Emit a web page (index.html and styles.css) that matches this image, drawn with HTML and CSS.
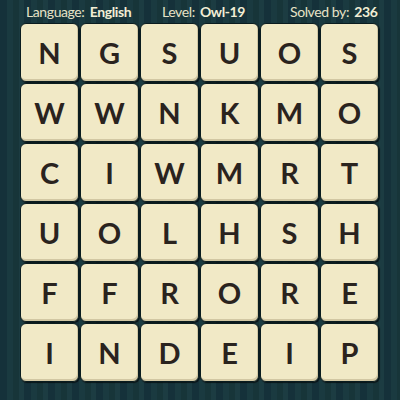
FILE: index.html
```html
<!DOCTYPE html>
<html>
<head>
<meta charset="utf-8">
<link rel="stylesheet" href="styles.css">
</head>
<body>
<div class="page">
  <div class="header">
    <div class="item lang">Language: <b>English</b></div>
    <div class="item level">Level: <b>Owl-19</b></div>
    <div class="item solved">Solved by: <b>236</b></div>
  </div>
  <div class="grid">
    <div class="tile">N</div><div class="tile">G</div><div class="tile">S</div><div class="tile">U</div><div class="tile">O</div><div class="tile">S</div>
    <div class="tile">W</div><div class="tile">W</div><div class="tile">N</div><div class="tile">K</div><div class="tile">M</div><div class="tile">O</div>
    <div class="tile">C</div><div class="tile">I</div><div class="tile">W</div><div class="tile">M</div><div class="tile">R</div><div class="tile">T</div>
    <div class="tile">U</div><div class="tile">O</div><div class="tile">L</div><div class="tile">H</div><div class="tile">S</div><div class="tile">H</div>
    <div class="tile">F</div><div class="tile">F</div><div class="tile">R</div><div class="tile">O</div><div class="tile">R</div><div class="tile">E</div>
    <div class="tile">I</div><div class="tile">N</div><div class="tile">D</div><div class="tile">E</div><div class="tile">I</div><div class="tile">P</div>
  </div>
</div>
</body>
</html>
```
FILE: styles.css
```css
html, body {
  margin: 0;
  padding: 0;
}
body {
  width: 400px;
  height: 400px;
  overflow: hidden;
  background-color: #17343a;
  background-image: repeating-linear-gradient(90deg,
    #15313a 0px, #15313a 7px,
    #1a3a40 7px, #1a3a40 13px,
    #173539 13px, #173539 19px,
    #1c3c42 19px, #1c3c42 24px);
  font-family: Lato, "Open Sans", sans-serif;
}
.page {
  display: flex;
  flex-direction: column;
}
.header {
  height: 23px;
  display: flex;
  align-items: center;
  padding-left: 26px;
  color: #e6e2c6;
  font-size: 14px;
  letter-spacing: -0.4px;
}
.header b {
  font-weight: 700;
  color: #f2eed5;
  margin-left: 2px;
}
.lang {
  width: 136px;
}
.level {
  width: 128px;
}
.solved {
  width: 82px;
  text-align: right;
  white-space: nowrap;
}
.grid {
  margin-left: 20px;
  display: grid;
  grid-template-columns: repeat(6, 59px);
  grid-auto-rows: 59px;
  gap: 1px;
}
.tile {
  box-sizing: border-box;
  background: #f1e9c6;
  border: 1px solid #0a1c1f;
  border-radius: 6px;
  box-shadow: inset -1px -2px 0 rgba(120, 100, 60, 0.25), 1px 1px 1px rgba(0,0,0,0.6);
  display: flex;
  align-items: center;
  justify-content: center;
  font-size: 29px;
  font-weight: 700;
  color: #2a231e;
  line-height: 1;
}
```
